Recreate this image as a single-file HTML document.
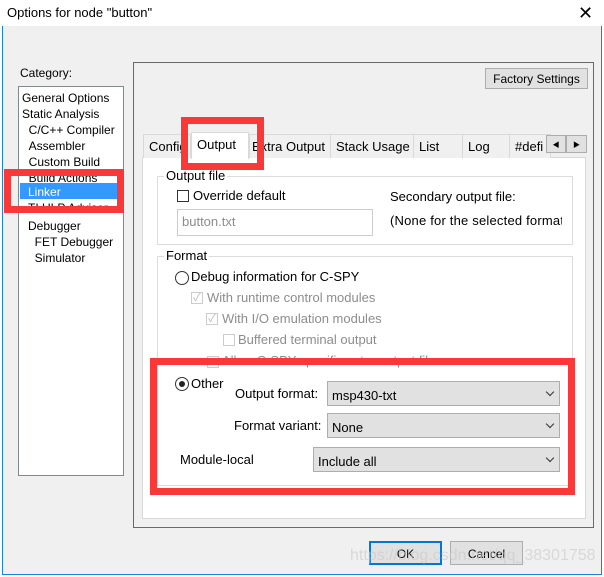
<!DOCTYPE html><html><head><style>
body{margin:0;width:604px;height:577px;position:relative;overflow:hidden;background:#fff;font-family:"Liberation Sans","Noto Sans CJK SC",sans-serif;font-size:12px;color:#000}
.a{position:absolute}
.win{left:2px;top:0;width:598px;height:574px;border:1px solid #1883d7;border-top:none;background:#f0f0f0}
.t{white-space:nowrap}
.red{position:absolute;border:7px solid #fb3838;box-sizing:border-box}
.cb{position:absolute;width:12px;height:12px;border:1px solid #333;background:#fff;box-sizing:border-box}
.dcb{border-color:#ccc;color:#bbb;font-size:11px;line-height:10px;text-align:center}
.sel{position:absolute;background:#e1e1e1;border:1px solid #adadad;box-sizing:border-box;font-size:13px;padding:6px 0 0 4px}
.sel:after{content:"";position:absolute;right:6px;top:7px;width:5px;height:5px;border-right:1px solid #333;border-bottom:1px solid #333;transform:rotate(45deg)}
.tab{position:absolute;top:134px;height:24px;border:1px solid #d9d9d9;border-bottom:none;background:#f0f0f0;font-size:13px;padding:4px 0 0 5px;box-sizing:border-box}
.grp{position:absolute;border:1px solid #dcdcdc;box-sizing:border-box}
.gl{position:absolute;background:#fff;font-size:13px;padding:0 2px}
.gray{color:#8d8d8d}
</style></head><body>
<div class="a t" style="left:7px;top:5px;font-size:13px">Options for node "button"</div>
<div class="a" style="left:578px;top:3px;font-size:18px;font-weight:300">✕</div>
<div class="a win" style="top:26px;height:548px"></div>
<div class="a t" style="left:20px;top:66px">Category:</div>
<div class="a" style="left:18px;top:86px;width:106px;height:390px;border:1px solid #828790;background:#fff;box-sizing:border-box"></div>
<div class="a t" style="left:22px;top:90px;line-height:16px">General Options<br>Static Analysis<br>&nbsp;&nbsp;C/C++ Compiler<br>&nbsp;&nbsp;Assembler<br>&nbsp;&nbsp;Custom Build<br>&nbsp;&nbsp;Build Actions</div>
<div class="a" style="left:20px;top:183px;width:98px;height:16px;background:#3399ff"></div>
<div class="a t" style="left:28px;top:185px;color:#fff">Linker</div>
<div class="a t" style="left:28px;top:201px">TI ULP Advisor</div>
<div class="a t" style="left:28px;top:218px;line-height:16px">Debugger<br>&nbsp;&nbsp;FET Debugger<br>&nbsp;&nbsp;Simulator</div>
<div class="a" style="left:133px;top:62px;width:461px;height:466px;border:1px solid #696969;box-sizing:border-box"></div>
<div class="a" style="left:485px;top:68px;width:103px;height:21px;background:#e1e1e1;border:1px solid #adadad;box-sizing:border-box;text-align:center;padding-top:3px">Factory Settings</div>
<div class="a" style="left:142px;top:157px;width:444px;height:362px;background:#fff;border:1px solid #d9d9d9;box-sizing:border-box"></div>
<div class="tab" style="left:143px;width:48px">Config</div>
<div class="tab" style="left:249px;width:84px;padding-left:2px">Extra Output</div>
<div class="tab" style="left:330px;width:84px">Stack Usage</div>
<div class="tab" style="left:413px;width:50px">List</div>
<div class="tab" style="left:462px;width:48px">Log</div>
<div class="tab" style="left:509px;width:42px;overflow:hidden">#defi</div>
<div class="tab" style="left:191px;top:132px;height:27px;width:58px;background:#fff;padding-top:4px">Output</div>
<div class="a" style="left:546px;top:135px;width:20px;height:18px;background:#e1e1e1;border:1px solid #adadad;box-sizing:border-box;font-size:7px;text-align:center;padding-top:4px">◀</div>
<div class="a" style="left:566px;top:135px;width:21px;height:18px;background:#e1e1e1;border:1px solid #adadad;box-sizing:border-box;font-size:7px;text-align:center;padding-top:4px">▶</div>
<div class="grp" style="left:157px;top:176px;width:416px;height:69px"></div>
<div class="gl" style="left:164px;top:168px">Output file</div>
<div class="cb" style="left:177px;top:190px"></div>
<div class="a t" style="left:193px;top:188px;font-size:13px">Override default</div>
<div class="a" style="left:177px;top:209px;width:196px;height:27px;border:1px solid #ccc;box-sizing:border-box;color:#8d8d8d;font-size:13px;padding:4px 0 0 4px">button.txt</div>
<div class="a t" style="left:390px;top:189px;font-size:13px">Secondary output file:</div>
<div class="a t" style="left:390px;top:213px;font-size:13px;width:172px;overflow:hidden"><span style="letter-spacing:0.2px">(None for the selected format)</span></div>
<div class="grp" style="left:157px;top:256px;width:416px;height:230px"></div>
<div class="gl" style="left:164px;top:248px">Format</div>
<div class="a" style="left:175px;top:271px;width:12px;height:12px;border:1px solid #333;border-radius:50%;background:#fff"></div>
<div class="a t" style="left:191px;top:269px;font-size:13px">Debug information for C-SPY</div>
<div class="cb dcb" style="left:191px;top:292px">✓</div><div class="a t gray" style="left:207px;top:290px;font-size:13px">With runtime control modules</div>
<div class="cb dcb" style="left:206px;top:313px">✓</div><div class="a t gray" style="left:222px;top:311px;font-size:13px">With I/O emulation modules</div>
<div class="cb dcb" style="left:223px;top:334px"></div><div class="a t gray" style="left:238px;top:332px;font-size:13px">Buffered terminal output</div>
<div class="cb dcb" style="left:207px;top:356px"></div><div class="a t gray" style="left:222px;top:353px;font-size:13px">Allow C-SPY-specific extra output file</div>
<div class="a" style="left:175px;top:377px;width:12px;height:12px;border:1px solid #333;border-radius:50%;background:#fff"></div>
<div class="a" style="left:179px;top:381px;width:6px;height:6px;border-radius:50%;background:#222"></div>
<div class="a t" style="left:191px;top:376px;font-size:13px">Other</div>
<div class="a t" style="left:235px;top:386px;font-size:13px">Output format:</div>
<div class="sel" style="left:327px;top:381px;width:233px;height:25px">msp430-txt</div>
<div class="a t" style="left:234px;top:418px;font-size:13px">Format variant:</div>
<div class="sel" style="left:327px;top:413px;width:233px;height:25px">None</div>
<div class="a t" style="left:180px;top:452px;font-size:13px">Module-local</div>
<div class="sel" style="left:313px;top:447px;width:247px;height:25px">Include all</div>
<div class="a" style="left:369px;top:541px;width:73px;height:24px;background:#e1e1e1;border:2px solid #0078d7;box-sizing:border-box;text-align:center;padding-top:4px">OK</div>
<div class="a" style="left:450px;top:541px;width:73px;height:24px;background:#e1e1e1;border:1px solid #adadad;box-sizing:border-box;text-align:center;padding-top:5px">Cancel</div>
<div class="a t" style="left:350px;top:547px;font-size:16px;color:rgba(200,200,200,.6)">https://blog.csdn.net/qq_38301758</div>
<div class="red" style="left:4px;top:169px;width:120px;height:44px"></div>
<div class="red" style="left:181px;top:117px;width:83px;height:53px"></div>
<div class="red" style="left:150px;top:358px;width:425px;height:137px"></div>
</body></html>
